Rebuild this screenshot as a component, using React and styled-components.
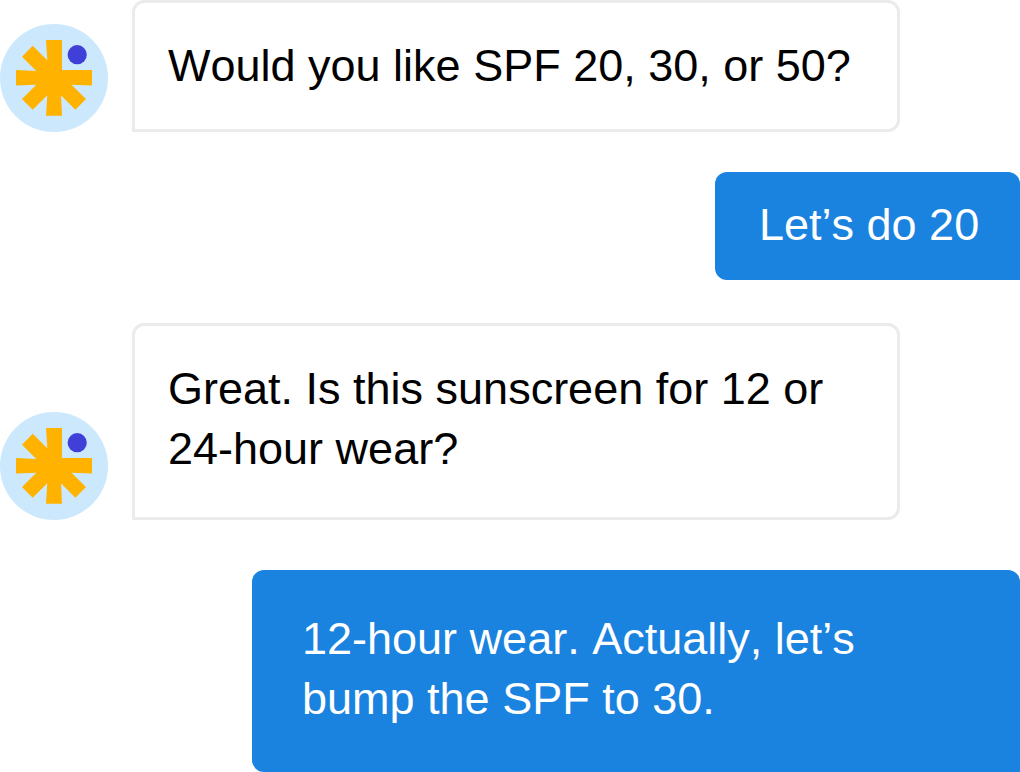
import styled, { createGlobalStyle } from "styled-components";

// ****** Global ******
const GlobalStyle = createGlobalStyle`
  * {
    box-sizing: border-box;
  }
  body {
    margin: 0;
    background: #ffffff;
    font-family: "Liberation Sans", Arial, sans-serif;
  }
`;

// ****** Chat ******
const Chat = styled.main`
  width: 100%;
  display: flex;
  flex-direction: column;
`;

// ****** Row ******
const Row = styled.div`
  display: flex;
  align-items: flex-end;
  gap: 24px;
  justify-content: ${(props) => (props.$mine ? "flex-end" : "flex-start")};
  margin-top: ${(props) => props.$gap || 0}px;
`;

// ****** Avatar ******
const Avatar = styled.svg`
  width: 108px;
  height: 108px;
  flex-shrink: 0;
`;

// ****** Bubble ******
const Bubble = styled.p`
  margin: 0;
  font-size: 45px;
  line-height: 60px;
  font-kerning: none;
`;

const BotBubble = styled(Bubble)`
  width: 768px;
  max-width: 100%;
  padding: 33px 33px;
  padding-bottom: ${(props) => (props.$long ? 38 : 33)}px;
  border: 3px solid #ebebeb;
  border-radius: 12px 12px 12px 0;
  color: #000000;
`;

const UserBubble = styled(Bubble)`
  width: ${(props) => (props.$wide ? "768px" : "auto")};
  min-width: 305px;
  max-width: 100%;
  padding: ${(props) => (props.$wide ? "39px 120px 43px 50px" : "23px 32px 25px 44px")};
  border-radius: 12px 12px 0 12px;
  background: #1a82df;
  color: #ffffff;
`;

const SunAvatar = () => (
  <Avatar viewBox="0 0 108 108" role="img" aria-label="Assistant">
    <circle cx="54" cy="54" r="54" fill="#cce8fd" />
    <path
      fill="#ffb300"
      d="M46 16H62V46H92V61.5L71.5 60.8L86 75L75.3 85.7L61 71.3L62 91.7H46L47.3 71.3L32.7 85.7L22 75L36.3 60.8L16 61.6V46L36.3 47L22 32.7L32.7 21.7L47.3 36.3Z"
    />
    <circle cx="77.2" cy="30.7" r="9.6" fill="#4040d9" />
  </Avatar>
);

const App = () => {
  return (
    <>
      <GlobalStyle />
      <Chat>
        <Row>
          <SunAvatar />
          <BotBubble>Would you like SPF 20, 30, or 50?</BotBubble>
        </Row>
        <Row $mine $gap={40}>
          <UserBubble>Let’s do 20</UserBubble>
        </Row>
        <Row $gap={43}>
          <SunAvatar />
          <BotBubble $long>Great. Is this sunscreen for 12 or 24-hour wear?</BotBubble>
        </Row>
        <Row $mine $gap={50}>
          <UserBubble $wide>12-hour wear. Actually, let’s bump the SPF to 30.</UserBubble>
        </Row>
      </Chat>
    </>
  );
};

export default App;
